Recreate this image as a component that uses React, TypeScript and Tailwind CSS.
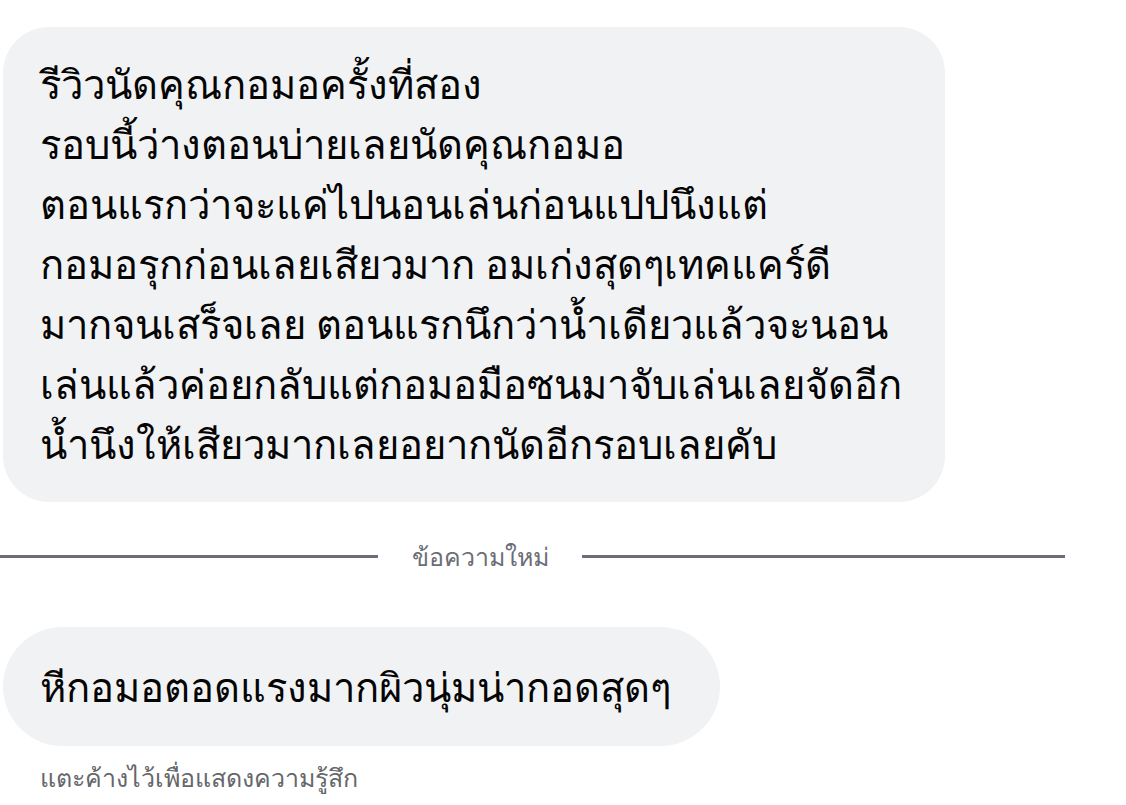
const lines = [
  "รีวิวนัดคุณกอมอครั้งที่สอง",
  "รอบนี้ว่างตอนบ่ายเลยนัดคุณกอมอ",
  "ตอนแรกว่าจะแค่ไปนอนเล่นก่อนแปปนึงแต่",
  "กอมอรุกก่อนเลยเสียวมาก อมเก่งสุดๆเทคแคร์ดี",
  "มากจนเสร็จเลย ตอนแรกนึกว่าน้ำเดียวแล้วจะนอน",
  "เล่นแล้วค่อยกลับแต่กอมอมือซนมาจับเล่นเลยจัดอีก",
  "น้ำนึงให้เสียวมากเลยอยากนัดอีกรอบเลยคับ",
];

export default function App() {
  return (
    <div className="h-[805px] w-[1126px] overflow-hidden bg-white font-['Noto_Sans',sans-serif] text-[#050505]">
      <div className="pl-[3px] pt-[27px]">
        <div className="w-[942px] rounded-[46px] bg-[#f1f2f4] px-[37px] pb-[28px] pt-[27px] text-[40px] leading-[60px]">
          {lines.map((line) => (
            <div key={line}>{line}</div>
          ))}
        </div>
      </div>

      <div className="mt-[38px] flex items-center">
        <div className="h-[3px] w-[378px] bg-[#6b6e76]" />
        <div className="w-[204px] text-center text-[25px] leading-[32px] text-[#6b6e76]">ข้อความใหม่</div>
        <div className="h-[3px] w-[483px] bg-[#6b6e76]" />
      </div>

      <div className="pl-[3px] pt-[55px]">
        <div className="flex h-[119px] w-[717px] items-center rounded-full bg-[#f1f2f4] px-[37px] text-[40px]">
          หีกอมอตอดแรงมากผิวนุ่มน่ากอดสุดๆ
        </div>
      </div>

      <div className="pl-[40px] pt-[13px] text-[25px] leading-[36px] text-[#65676b]">แตะค้างไว้เพื่อแสดงความรู้สึก</div>
    </div>
  );
}
